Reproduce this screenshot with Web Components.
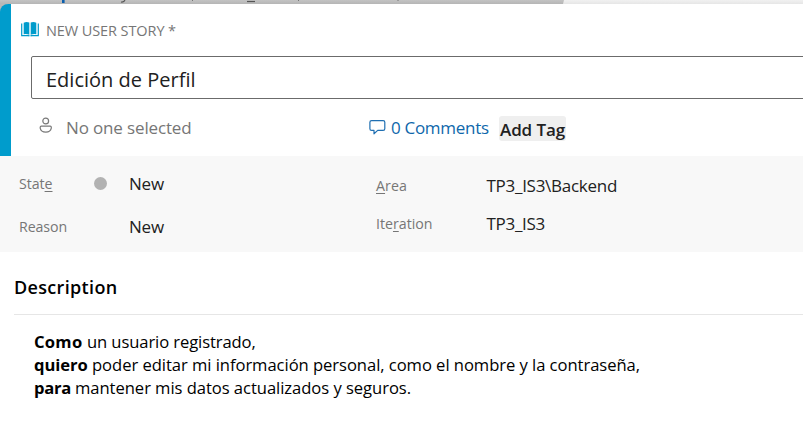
<!DOCTYPE html>
<html lang="es">
<head>
<meta charset="utf-8">
<title>User Story</title>
<style>
html,body{margin:0;height:100%;overflow:hidden;background:#fff;font-family:"Open Sans","Noto Sans",sans-serif;color:#212121}
</style>
</head>
<body>
<work-item-form></work-item-form>
<script>
// Inline run of text whose tracking is adjusted so that it fills the width in its "w" attribute.
class FitText extends HTMLElement{
  connectedCallback(){
    this.attachShadow({mode:'open'}).innerHTML=`<style>:host{display:inline-block;white-space:pre;flex:none}</style><span><slot></slot></span>`;
    const w=parseFloat(this.getAttribute('w')), s=this.shadowRoot.querySelector('span');
    if(w){
      const n=this.textContent.length, nat=s.getBoundingClientRect().width;
      this.style.letterSpacing=((w-nat)/n).toFixed(3)+'px';
    }
  }
}
class BackdropStrip extends HTMLElement{
  connectedCallback(){
    this.attachShadow({mode:'open'}).innerHTML=`<style>:host{display:block;height:4px}svg{display:block}</style>
    <svg width="803" height="16" viewBox="0 0 803 16">
      <defs><linearGradient id="g" x2="0" y2="1"><stop offset="0" stop-color="#c3c3c3"/><stop offset="1" stop-color="#b5b5b5"/></linearGradient>
      <linearGradient id="l" x2="0" y2="1"><stop offset="0" stop-color="#f1f1f1"/><stop offset="1" stop-color="#e6e6e6"/></linearGradient></defs>
      <rect width="14" height="16" fill="#b8b8b8"/><rect width="564" height="4" fill="url(#g)"/>
      <path d="M564 0H803V4H563Z" fill="url(#l)"/>
      <path d="M62 0h2.600v3H62z" fill="#0b5fae"/>
      <path d="M125 0q-1 2.500-4 2" fill="none" stroke="#555" stroke-width="1.200"/>
      <path d="M247 1.500h8" stroke="#555" stroke-width="1.200"/>
      <path d="M192.500 0v1M298.500 0v1M398 0v1" stroke="#777"/>
    </svg>`;
  }
}
class BookIcon extends HTMLElement{
  connectedCallback(){
    this.attachShadow({mode:'open'}).innerHTML=`<style>:host{display:block;flex:none}svg{display:block}</style>
    <svg width="20" height="17" viewBox="0 0 20 17" fill="#009ccc">
      <path d="M2.700 1.700Q5.500.300 8.300 1.500V13.700Q5.500 12.700 2.700 13.200Z"/><path d="M9.700 1.500Q12.500.300 15.300 1.700V13.200Q12.500 12.700 9.700 13.700Z"/>
      <path d="M.700 2.500V14.600H7.300Q8.200 14.700 8.400 15.300M17.300 2.500V14.600H10.700Q9.800 14.700 9.600 15.300" fill="none" stroke="#009ccc" stroke-width="1.200"/>
    </svg>`;
  }
}
class PersonIcon extends HTMLElement{
  connectedCallback(){
    this.attachShadow({mode:'open'}).innerHTML=`<style>:host{display:block;flex:none}svg{display:block}</style>
    <svg width="14" height="17" viewBox="0 0 14 17" fill="none" stroke="#7a7a7a" stroke-width="1.200">
      <circle cx="6.700" cy="4" r="2.900"/><path d="M2.300 9.100H11.200Q12.300 9.100 12.300 10.200V11.200Q11.500 15.200 6.800 15.200Q1.900 15.200 1.200 11.200V10.200Q1.200 9.100 2.300 9.100Z"/>
    </svg>`;
  }
}
class CommentIcon extends HTMLElement{
  connectedCallback(){
    this.attachShadow({mode:'open'}).innerHTML=`<style>:host{display:block;flex:none}svg{display:block}</style>
    <svg width="17" height="17" viewBox="0 0 17 17" fill="none" stroke="#1f6fb2" stroke-width="1.200" stroke-linejoin="round">
      <path d="M2.600 1.600H14.100Q15.800 1.600 15.800 3.300V9.700Q15.800 11.400 14.100 11.400H8.700L5 14.800V11.400H2.600Q.900 11.400 .900 9.700V3.300Q.900 1.600 2.600 1.600Z"/>
    </svg>`;
  }
}
class WorkItemHeader extends HTMLElement{
  connectedCallback(){
    this.attachShadow({mode:'open'}).innerHTML=`<style>
    :host{display:block;position:relative;box-sizing:border-box;height:152px;border-left:11px solid #009ccc;border-top-left-radius:8px;background:#fff;padding-top:17px;overflow:hidden}
    .type{display:flex;height:20px;line-height:20px;padding-left:10px;font-size:14.500px;color:#767676}
    .type fit-text{margin-left:5px}
    .title{box-sizing:border-box;height:43px;margin:15px -4px 0 20px;border:1px solid #6b6b6b;border-radius:2px;padding-left:14px;font-size:20px;line-height:45px}
    .meta{display:flex;align-items:flex-start;margin-top:17px;padding-left:28px;font-size:17px;line-height:25px}
    .who{display:flex;width:330px;color:#767676}.who fit-text{margin-left:13px}
    .com{display:flex;color:#0e67ab;width:130px}.com fit-text{margin-left:5px}
    .who,.com{line-height:23px}
    .tag{box-sizing:border-box;width:67px;height:25px;background:#efefef;border-radius:3px;padding-left:1px;font-weight:600;line-height:27px}
    person-icon{margin-top:1px}comment-icon{margin-top:3px}
    </style>
    <div class="type"><book-icon></book-icon><fit-text w="130">NEW USER STORY *</fit-text></div>
    <div class="title"><fit-text w="149.500">Edición de Perfil</fit-text></div>
    <div class="meta"><div class="who"><person-icon></person-icon><fit-text w="125.500">No one selected</fit-text></div>
    <div class="com"><comment-icon></comment-icon><fit-text w="97.700">0 Comments</fit-text></div>
    <div class="tag"><fit-text w="65">Add Tag</fit-text></div></div>`;
  }
}
class FieldRow extends HTMLElement{
  connectedCallback(){
    this.attachShadow({mode:'open'}).innerHTML=`<style>
    :host{display:grid;grid-template-columns:var(--label,74px) auto;align-items:start;height:24px;font-size:17px;line-height:24px}
    .l{display:flex;font-size:14.200px;color:#767676}.v{display:flex}</style>
    <span class="l"><slot name="label"></slot></span><span class="v"><slot></slot></span>`;
  }
}
class FieldPanel extends HTMLElement{
  connectedCallback(){
    this.attachShadow({mode:'open'}).innerHTML=`<style>
    :host{display:grid;grid-template-columns:357px 1fr;box-sizing:border-box;height:96px;background:#f8f8f8;padding-left:19px}
    .a{padding-top:16px;--label:110px}.b{padding-top:18px;--label:110.500px}
    .a field-row+field-row{margin-top:19px}.b field-row+field-row{margin-top:14px}
    .state{display:flex;width:110px;align-items:center}.dot{width:13px;height:13px;border-radius:50%;background:#b2b2b2;margin-left:auto;margin-right:22.500px;margin-top:-2px}
    u{text-underline-offset:1.500px;text-decoration-thickness:1px}
    </style>
    <div class="a"><field-row><span slot="label" class="state"><fit-text w="33.500">Stat<u>e</u></fit-text><i class="dot"></i></span><fit-text w="35">New</fit-text></field-row>
    <field-row><fit-text slot="label" w="48">Reason</fit-text><fit-text w="35">New</fit-text></field-row></div>
    <div class="b"><field-row><fit-text slot="label" w="31"><u>A</u>rea</fit-text><fit-text w="130.500">TP3_IS3\\Backend</fit-text></field-row>
    <field-row><fit-text slot="label" w="56.500">Ite<u>r</u>ation</fit-text><fit-text w="58.500">TP3_IS3</fit-text></field-row></div>`;
  }
}
class DescriptionSection extends HTMLElement{
  connectedCallback(){
    this.attachShadow({mode:'open'}).innerHTML=`<style>
    :host{display:block;padding:22px 0 0 14px;color:#000}
    h2{margin:0;height:40px;border-bottom:1px solid #e6e6e6;font-size:18px;font-weight:600;line-height:27px}
    .body{padding:15px 0 0 20px;font-size:16.600px;line-height:23px}
    .body div{display:flex;height:23px}b{display:block;flex:none}
    </style>
    <h2><fit-text w="103.500">Description</fit-text></h2>
    <div class="body">
    <div><b><fit-text w="53">Como </fit-text></b><fit-text w="168.700">un usuario registrado,</fit-text></div>
    <div><b><fit-text w="58">quiero </fit-text></b><fit-text w="548">poder editar mi información personal, como el nombre y la contraseña,</fit-text></div>
    <div><b><fit-text w="41">para </fit-text></b><fit-text w="336">mantener mis datos actualizados y seguros.</fit-text></div>
    </div>`;
  }
}
class WorkItemForm extends HTMLElement{
  connectedCallback(){
    this.attachShadow({mode:'open'}).innerHTML=`<style>:host{display:block;height:427px;overflow:hidden}</style>
    <backdrop-strip></backdrop-strip><work-item-header></work-item-header><field-panel></field-panel><description-section></description-section>`;
  }
}
[['fit-text',FitText],['book-icon',BookIcon],['person-icon',PersonIcon],['comment-icon',CommentIcon],['backdrop-strip',BackdropStrip],['field-row',FieldRow],['work-item-header',WorkItemHeader],['field-panel',FieldPanel],['description-section',DescriptionSection],['work-item-form',WorkItemForm]].forEach(([n,c])=>customElements.define(n,c));
</script>
</body>
</html>
